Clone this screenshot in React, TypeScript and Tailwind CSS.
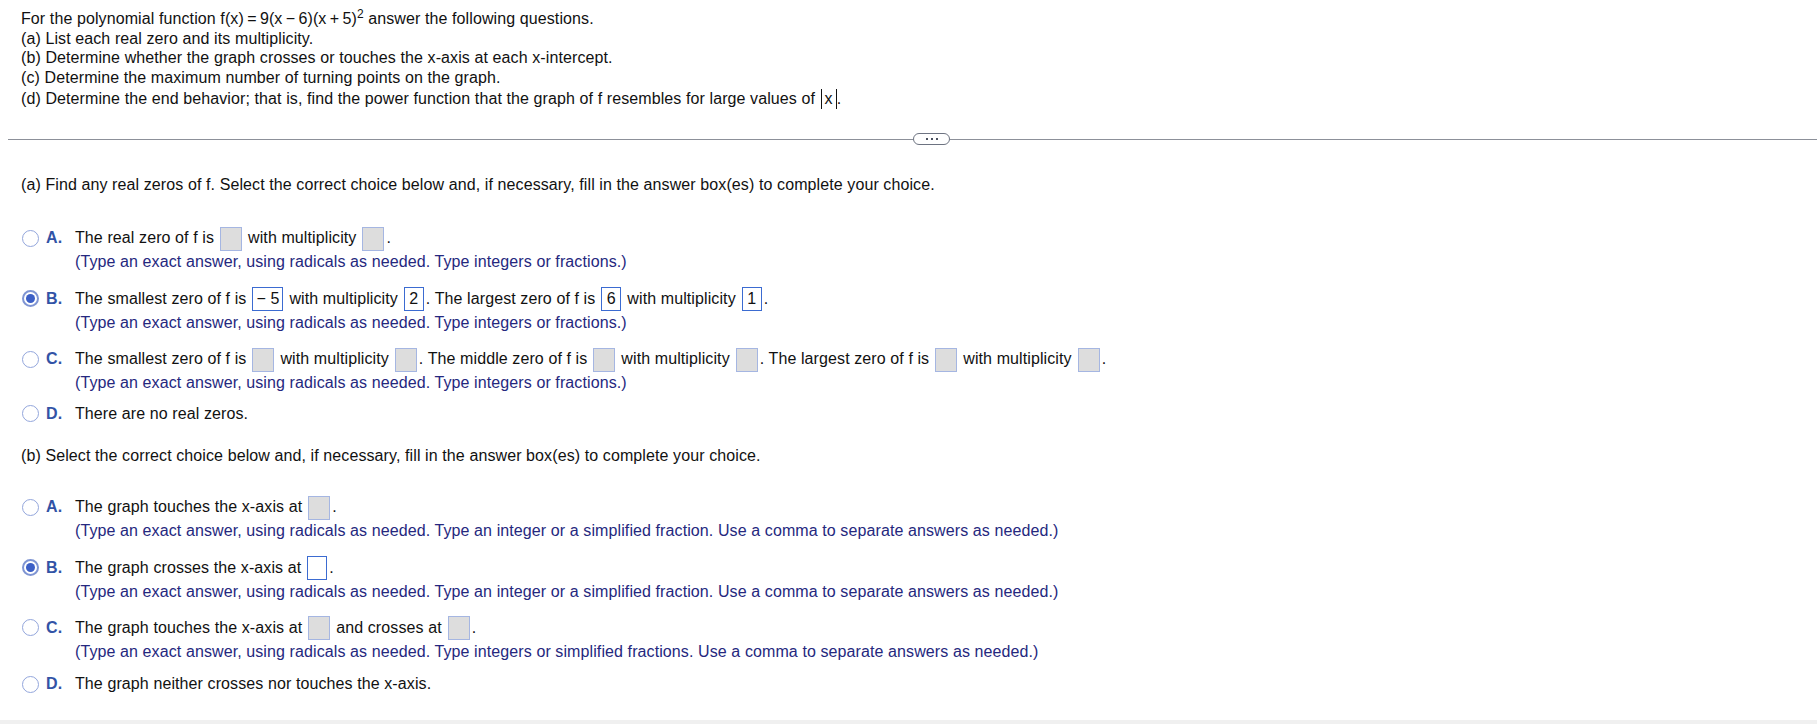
import React from "react";

function Radio({ checked }: { checked?: boolean }) {
  if (checked) {
    return (
      <span className="flex h-[17px] w-[17px] items-center justify-center rounded-full border-[2px] border-[#7f95d3] bg-white">
        <span className="h-[9px] w-[9px] rounded-full bg-[#3c5fc6]" />
      </span>
    );
  }
  return <span className="block h-[17px] w-[17px] rounded-full border-[1.5px] border-[#93a6dc] bg-white" />;
}

function Box({ value, active, dot }: { value?: string; active?: boolean; dot?: boolean }) {
  const spacing = dot ? "ml-[6px] mr-[2px]" : "mx-[6px]";
  if (value !== undefined || active) {
    return (
      <span
        className={`inline-flex h-[24px] min-w-[20px] items-center justify-center border border-[#3b6bd1] bg-white px-[3px] align-middle leading-none ${spacing}`}
      >
        {value}
      </span>
    );
  }
  return <span className={`inline-block h-[24px] w-[22px] border border-[#a5b6e2] bg-[#dddddd] align-middle ${spacing}`} />;
}

function Choice({
  letter,
  checked,
  note,
  mt,
  children,
}: {
  letter: string;
  checked?: boolean;
  note?: string;
  mt: string;
  children: React.ReactNode;
}) {
  return (
    <div className={`flex ${mt}`}>
      <div className={`flex w-[54px] shrink-0 items-center pl-[1px] ${note ? "h-[26px]" : "h-[20px]"}`}>
        <Radio checked={checked} />
        <span className="ml-[7px] text-[16px] font-bold text-[#3253a6]">{letter}.</span>
      </div>
      <div>
        <div className={note ? "leading-[26px] whitespace-nowrap" : "leading-[20px] whitespace-nowrap"}>{children}</div>
        {note && <div className="leading-[22px] text-[#25287e]">{note}</div>}
      </div>
    </div>
  );
}

const noteA = "(Type an exact answer, using radicals as needed. Type integers or fractions.)";

export default function App() {
  return (
    <div className="min-h-screen bg-white font-['Liberation_Sans',Arial,sans-serif] text-[16px] tracking-[0.1px] text-[#111111]">
      <div className="h-[720px]">
        {/* Problem statement */}
        <div className="px-[21px] pt-[9px] leading-[19.5px]">
          <div>
            For the polynomial function f(x)&thinsp;=&thinsp;9(x&thinsp;−&thinsp;6)(x&thinsp;+&thinsp;5)
            <sup className="text-[12px]">2</sup> answer the following questions.
          </div>
          <div>(a) List each real zero and its multiplicity.</div>
          <div>(b) Determine whether the graph crosses or touches the x-axis at each x-intercept.</div>
          <div>(c) Determine the maximum number of turning points on the graph.</div>
          <div className="flex h-[24px] items-center">
            <span className="whitespace-pre">
              (d) Determine the end behavior; that is, find the power function that the graph of f resembles for large values of{" "}
            </span>
            <span className="ml-[1px] inline-flex h-[20px] items-center border-x border-[#111111] px-[3px]">x</span>
            <span>.</span>
          </div>
        </div>

        {/* Divider */}
        <div className="mt-[22px] flex h-[12px] items-center pl-[8px]">
          <div className="h-px w-[905px] bg-[#8c9099]" />
          <div className="flex h-[12px] w-[37px] items-center justify-center gap-[3px] rounded-full border border-[#6d7381] bg-white">
            <span className="h-[2px] w-[2px] bg-[#4b5160]" />
            <span className="h-[2px] w-[2px] bg-[#4b5160]" />
            <span className="h-[2px] w-[2px] bg-[#4b5160]" />
          </div>
          <div className="h-px flex-1 bg-[#8c9099]" />
        </div>

        <div className="px-[21px]">
          <div className="mt-[30px] leading-[20px]">
            (a) Find any real zeros of f. Select the correct choice below and, if necessary, fill in the answer box(es) to complete your choice.
          </div>

          <Choice letter="A" note={noteA} mt="mt-[30px]">
            The real zero of f is
            <Box />
            with multiplicity
            <Box dot />.
          </Choice>

          <Choice letter="B" checked note={noteA} mt="mt-[12.5px]">
            The smallest zero of f is
            <Box value="− 5" />
            with multiplicity
            <Box value="2" dot />. The largest zero of f is
            <Box value="6" />
            with multiplicity
            <Box value="1" dot />.
          </Choice>

          <Choice letter="C" note={noteA} mt="mt-[12.5px]">
            The smallest zero of f is
            <Box />
            with multiplicity
            <Box dot />. The middle zero of f is
            <Box />
            with multiplicity
            <Box dot />. The largest zero of f is
            <Box />
            with multiplicity
            <Box dot />.
          </Choice>

          <Choice letter="D" mt="mt-[9.5px]">
            There are no real zeros.
          </Choice>

          <div className="mt-[22px] leading-[20px]">
            (b) Select the correct choice below and, if necessary, fill in the answer box(es) to complete your choice.
          </div>

          <Choice
            letter="A"
            note="(Type an exact answer, using radicals as needed. Type an integer or a simplified fraction. Use a comma to separate answers as needed.)"
            mt="mt-[28.5px]"
          >
            The graph touches the x-axis at
            <Box dot />.
          </Choice>

          <Choice
            letter="B"
            checked
            note="(Type an exact answer, using radicals as needed. Type an integer or a simplified fraction. Use a comma to separate answers as needed.)"
            mt="mt-[12.5px]"
          >
            The graph crosses the x-axis at
            <Box active dot />.
          </Choice>

          <Choice
            letter="C"
            note="(Type an exact answer, using radicals as needed. Type integers or simplified fractions. Use a comma to separate answers as needed.)"
            mt="mt-[12px]"
          >
            The graph touches the x-axis at
            <Box />
            and crosses at
            <Box dot />.
          </Choice>

          <Choice letter="D" mt="mt-[11.5px]">
            The graph neither crosses nor touches the x-axis.
          </Choice>
        </div>
      </div>
      <div className="h-[40px] bg-[#f0f0f0]" />
    </div>
  );
}
